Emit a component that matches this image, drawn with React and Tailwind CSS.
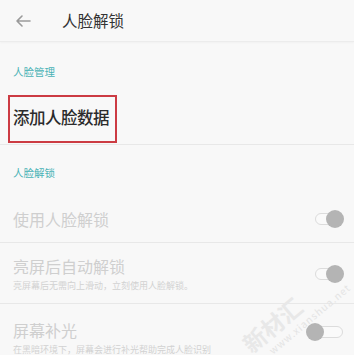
import React from "react";

const font = { fontFamily: '"Noto Sans CJK SC", "Noto Sans", sans-serif' };

const Toggle = ({ on }) => (
  <div className="relative w-[28px] h-[20px] shrink-0">
    <div className="absolute left-0 right-0 top-[4px] h-[12px] rounded-full border border-[#dcdcdc] bg-[#fafafa]" />
    <div
      className={
        on
          ? "absolute top-[1px] right-[-1px] w-[18px] h-[18px] rounded-full bg-[#b4b4b4]"
          : "absolute top-[1px] left-[-9px] w-[18px] h-[18px] rounded-full bg-[#b4b4b4]"
      }
    />
  </div>
);

const Row = ({ title, sub, on, last, className }) => (
  <div
    className={
      "flex items-center justify-between pl-[13px] pr-[11px] " +
      (last ? "" : "border-b border-[#e8e8e8] ") +
      className
    }
  >
    <div className={"flex flex-col " + (last ? "pt-[12px]" : "")}>
      <span className="text-[16px] leading-[20px] text-[#cfcfcf]">{title}</span>
      {sub && (
        <span className="text-[9px] leading-[14px] mt-[3px] text-[#d2d2d2] whitespace-nowrap">
          {sub}
        </span>
      )}
    </div>
    <Toggle on={on} />
  </div>
);

export default function App() {
  return (
    <div className="w-[354px] h-[355px] bg-[#f8f8f8] overflow-hidden relative" style={font}>
      {/* header */}
      <div className="h-[42px] flex items-center border-b border-[#ececec] shadow-[0_1px_2px_rgba(0,0,0,0.03)]">
        <svg className="ml-[15px]" width="16" height="14" viewBox="0 0 16 14" fill="none" stroke="#9a9a9a" strokeWidth="1.6" strokeLinecap="round" strokeLinejoin="round">
          <path d="M15 7H2M7 2L2 7l5 5" />
        </svg>
        <span className="ml-[31px] text-[15.5px] text-[#333]">人脸解锁</span>
      </div>

      {/* face management */}
      <div className="pl-[13px] pt-[22px] h-[53px] text-[10.5px] text-[#4ab3b6]">人脸管理</div>
      <div className="border-b border-[#e8e8e8] pl-[8px] pb-[1px]">
        <div className="w-[109px] h-[48px] border-2 border-[#cc3b43] flex items-center pl-[3px] pb-[3px]">
          <span className="text-[16.5px] tracking-[-0.5px] text-[#2b2b2b] font-medium">添加人脸数据</span>
        </div>
      </div>

      {/* face unlock */}
      <div className="pl-[13px] pt-[20px] h-[50px] text-[10.5px] text-[#4ab3b6]">人脸解锁</div>
      <Row title="使用人脸解锁" on className="h-[48px]" />
      <Row title="亮屏后自动解锁" sub="亮屏幕后无需向上滑动，立刻使用人脸解锁。" on className="h-[61px] pt-[2px]" />
      <Row title="屏幕补光" sub="在黑暗环境下，屏幕会进行补光帮助完成人脸识别" on={false} last className="h-[56px]" />

      {/* watermark */}
      <div className="absolute left-[236px] top-[296px] -rotate-[40deg] flex flex-col items-start pointer-events-none">
        <span className="text-[23px] font-bold text-[#e8e8e8] leading-none">新材汇</span>
        <span className="ml-[16px] mt-[3px] text-[10px] text-[#e4e4e4] leading-none tracking-[1px]">www.xianshua.net</span>
      </div>
    </div>
  );
}
